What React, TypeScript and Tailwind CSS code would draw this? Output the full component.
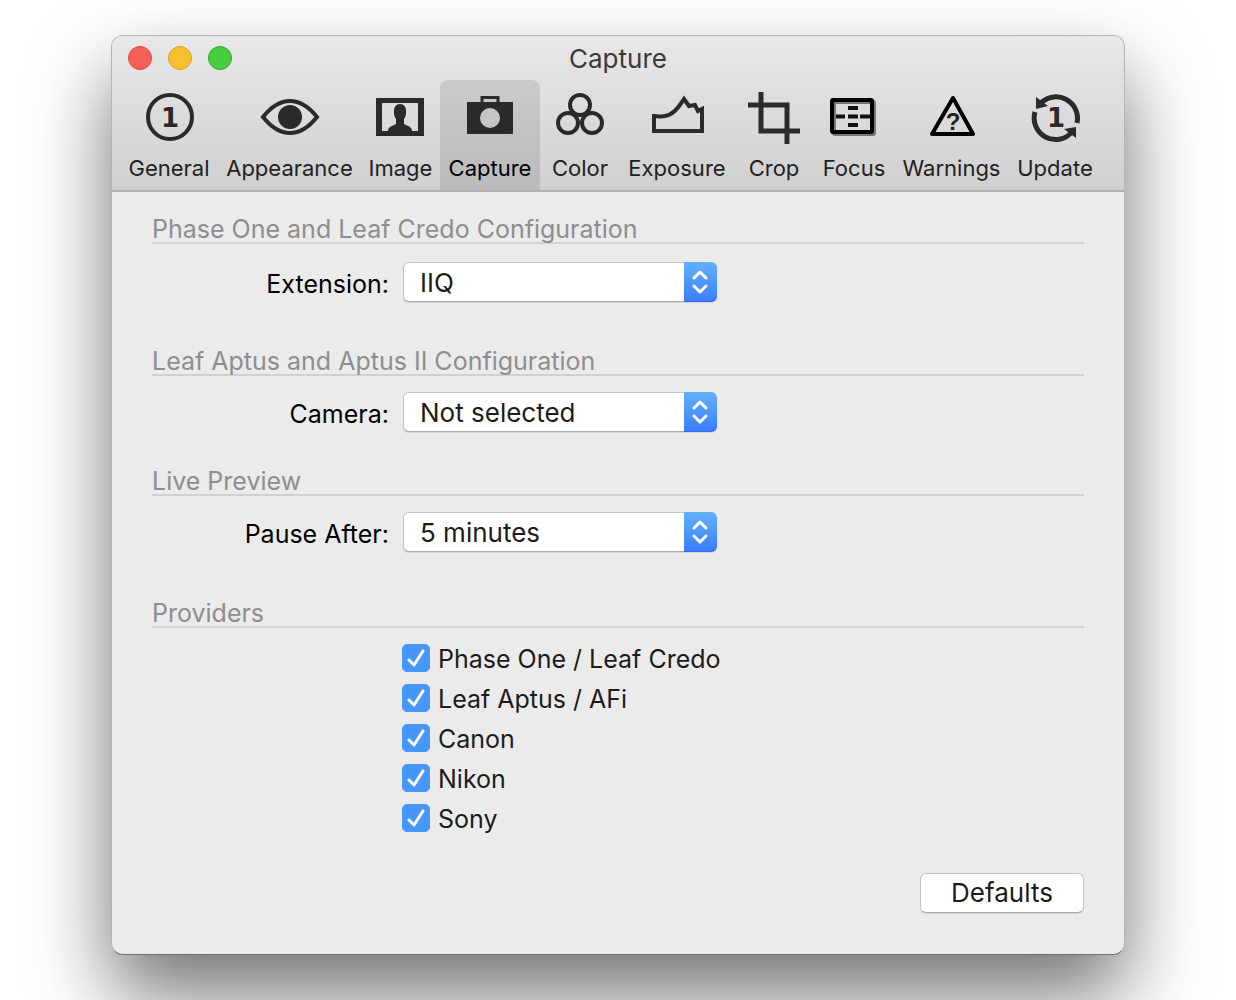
import { useState, type ReactNode } from "react";

type Tab = {
  name: string;
  width: string;
  icon: ReactNode;
};

type SelectRowProps = {
  id: string;
  label: string;
  options: string[];
};

const tabs: Tab[] = [
  {
    name: "General",
    width: "w-[98px]",
    icon: (
      <>
        <circle cx="33" cy="28" r="22" fill="none" stroke="currentColor" strokeWidth="4" />
        <text x="33" y="38" fontSize="26" fontWeight="700" textAnchor="middle" fill="currentColor">1</text>
      </>
    ),
  },
  {
    name: "Appearance",
    width: "w-[143px]",
    icon: (
      <>
        <path d="M5 28C13 18 21 12 32 12S51 18 59 28C51 38 43 44 32 44S13 38 5 28Z" fill="none" stroke="currentColor" strokeWidth="4" />
        <circle cx="32" cy="28" r="12" fill="currentColor" />
      </>
    ),
  },
  {
    name: "Image",
    width: "w-[79px]",
    icon: (
      <path
        fillRule="evenodd"
        fill="currentColor"
        d="M7 9H55V47H7ZM13 14V42H19C19 38 23 37 27 35V30C25 28 25 25 25 22C25 18 27 15 31 15S37 18 37 22C37 25 37 28 35 30V35C39 37 43 38 43 42H49V14Z"
      />
    ),
  },
  {
    name: "Capture",
    width: "w-[100px]",
    icon: (
      <>
        <path d="M24 13V8.500H40V13" fill="none" stroke="currentColor" strokeWidth="3" />
        <path
          fillRule="evenodd"
          fill="currentColor"
          d="M9 13H55V45H9ZM32 19A10 10 0 1 0 32 39A10 10 0 1 0 32 19Z"
        />
      </>
    ),
  },
  {
    name: "Color",
    width: "w-[80px]",
    icon: (
      <g fill="none" stroke="currentColor" strokeWidth="4">
        <circle cx="32" cy="16" r="10" />
        <circle cx="20" cy="34" r="10" />
        <circle cx="44" cy="34" r="10" />
      </g>
    ),
  },
  {
    name: "Exposure",
    width: "w-[114px]",
    icon: (
      <path d="M9 27V42H57V20L53 22L50 16L44 17L39 10C36 14 30 26 20 27C16 28 12 27 9 27Z" fill="none" stroke="currentColor" strokeWidth="4" />
    ),
  },
  {
    name: "Crop",
    width: "w-[80px]",
    icon: (
      <path d="M19 3V42H58M6 16H45V55" fill="none" stroke="currentColor" strokeWidth="5" />
    ),
  },
  {
    name: "Focus",
    width: "w-[80px]",
    icon: (
      <>
        <rect x="12" y="13" width="40" height="32" rx="1" fill="none" stroke="#777" strokeWidth="4" />
        <rect x="10" y="11" width="40" height="32" rx="1" fill="none" stroke="#000" strokeWidth="4" />
        <path d="M26 19H36M14 27.500H23M26 27.500H36M38 27.500H48M26 36H36" stroke="#111" strokeWidth="4" />
      </>
    ),
  },
  {
    name: "Warnings",
    width: "w-[115px]",
    icon: (
      <>
        <path d="M33 9L53 45H12Z" fill="none" stroke="#000" strokeWidth="4" strokeLinejoin="round" />
        <text x="33" y="41" fontSize="24" fontWeight="700" textAnchor="middle" fill="#222" className="font-['Liberation_Sans',sans-serif]">?</text>
      </>
    ),
  },
  {
    name: "Update",
    width: "w-[92px]",
    icon: (
      <>
        <path d="M17 15A21.500 21.500 0 0 1 54 34M12 23A21.500 21.500 0 0 0 49 43" fill="none" stroke="currentColor" strokeWidth="5" />
        <path d="M13 8V20L25 17ZM53 49V38L41 40Z" fill="currentColor" />
        <text x="33" y="38" fontSize="26" fontWeight="700" textAnchor="middle" fill="currentColor">1</text>
      </>
    ),
  },
];

const providers = ["Phase One / Leaf Credo", "Leaf Aptus / AFi", "Canon", "Nikon", "Sony"];

function SectionTitle({ children }: { children: ReactNode }) {
  return (
    <h2 className="h-8 border-b-2 border-[#d1d1d1] text-[25px] leading-[34px] text-[#8e8e8e]">
      {children}
    </h2>
  );
}

function SelectRow({ id, label, options }: SelectRowProps) {
  return (
    <div className="flex items-center gap-[14px]">
      <label htmlFor={id} className="w-[237px] pt-1 text-right text-[25px] leading-9 text-black">
        {label}
      </label>

      <div className="relative w-[314px]">
        <select
          id={id}
          className="block h-10 w-full appearance-none rounded-md border border-[#c4c4c4] border-b-[#a9a9a9] bg-white pt-0.5 pr-10 pl-4 text-[26px] leading-9 text-[#1c1c1c] shadow-[0_1px_1px_rgba(0,0,0,0.1)]"
        >
          {options.map((option) => (
            <option key={option}>{option}</option>
          ))}
        </select>

        <span className="pointer-events-none absolute inset-y-0 right-0 flex w-[33px] items-center justify-center rounded-r-md border-b border-[#3367f5] bg-linear-to-b from-[#64b0fc] to-[#3c7dff] pr-px">
          <svg width="18" height="26" viewBox="0 0 18 26" fill="none" stroke="#fff" strokeWidth="3" strokeLinecap="round" strokeLinejoin="round">
            <path d="M3 9L9 3L15 9M3 17L9 23L15 17" />
          </svg>
        </span>
      </div>
    </div>
  );
}

function Provider({ name }: { name: string }) {
  const [checked, setChecked] = useState(true);

  return (
    <label className="flex h-7 items-center gap-2 text-[25px] leading-[30px] text-[#1c1c1c]">
      <span className="relative size-7">
        <input
          type="checkbox"
          checked={checked}
          onChange={() => setChecked(!checked)}
          className="block size-7 appearance-none rounded-[5px] border border-[#bbb] bg-white checked:border-[#4797fb] checked:bg-[#4797fb]"
        />
        {checked && (
          <svg viewBox="0 0 28 28" className="pointer-events-none absolute inset-0" fill="none" stroke="#fff" strokeWidth="3" strokeLinecap="round" strokeLinejoin="round">
            <path d="M7 16L12 21L21 7" />
          </svg>
        )}
      </span>
      <span className="pt-0.5">{name}</span>
    </label>
  );
}

export default function App() {
  const [active, setActive] = useState("Capture");

  return (
    <div className="min-h-screen overflow-hidden bg-white px-6 py-[35px] font-['Inter',sans-serif]">
      <main className="mx-auto max-w-[1014px] overflow-hidden rounded-xl border border-[#b4b4b4] border-b-[#6e6e6e] bg-[#ebebeb] shadow-[0_40px_80px_rgba(0,0,0,0.55)]">

        {/* Title bar and toolbar */}
        <header className="border-b-2 border-[#b1b1b1] bg-linear-to-b from-[#e8e8e8] to-[#d0d0d0]">
          <div className="grid h-11 grid-cols-3 items-center px-4">
            <div className="flex gap-4">
              <button aria-label="Close" className="size-6 rounded-full border border-[#e2463f] bg-[#f45f57]" />
              <button aria-label="Minimize" className="size-6 rounded-full border border-[#e0a123] bg-[#f7c02e]" />
              <button aria-label="Zoom" className="size-6 rounded-full border border-[#2dac2f] bg-[#46cd40]" />
            </div>
            <h1 className="pt-0.5 text-center text-[26px] leading-8 text-[#3a3a3a]">{active}</h1>
          </div>

          <nav className="flex px-2">
            {tabs.map((tab) => (
              <button
                key={tab.name}
                onClick={() => setActive(tab.name)}
                className={`flex h-[110px] flex-col items-center rounded-t-lg pt-[9px] ${tab.width} ${
                  active === tab.name
                    ? "bg-linear-to-b from-[#cbcbcb] to-[#bababa] text-black"
                    : "text-[#222]"
                }`}
              >
                <svg width="64" height="56" viewBox="0 0 64 56" className="font-['DejaVu_Sans',sans-serif] text-[#2b2a2b]">
                  {tab.icon}
                </svg>
                <span className="mt-2 text-[22px] leading-[30px]">{tab.name}</span>
              </button>
            ))}
          </nav>
        </header>

        <div className="pt-5 pr-10 pb-[41px] pl-10">
          <section className="mb-[42px]">
            <SectionTitle>Phase One and Leaf Credo Configuration</SectionTitle>
            <div className="mt-[18px]">
              <SelectRow id="extension" label="Extension:" options={["IIQ", "EIP"]} />
            </div>
          </section>

          <section className="mb-8">
            <SectionTitle>Leaf Aptus and Aptus II Configuration</SectionTitle>
            <div className="mt-4">
              <SelectRow id="camera" label="Camera:" options={["Not selected"]} />
            </div>
          </section>

          <section className="mb-11">
            <SectionTitle>Live Preview</SectionTitle>
            <div className="mt-4">
              <SelectRow id="pause" label="Pause After:" options={["5 minutes", "10 minutes"]} />
            </div>
          </section>

          <section>
            <SectionTitle>Providers</SectionTitle>
            <div className="mt-4 ml-[250px] flex flex-col items-start gap-3">
              {providers.map((name) => (
                <Provider key={name} name={name} />
              ))}
            </div>
          </section>

          <div className="mt-[41px] flex justify-end">
            <button className="h-10 w-[164px] rounded-md border border-[#c4c4c4] border-b-[#a9a9a9] bg-white text-[26px] leading-9 text-[#1c1c1c] shadow-[0_1px_1px_rgba(0,0,0,0.1)]">
              Defaults
            </button>
          </div>
        </div>
      </main>
    </div>
  );
}
